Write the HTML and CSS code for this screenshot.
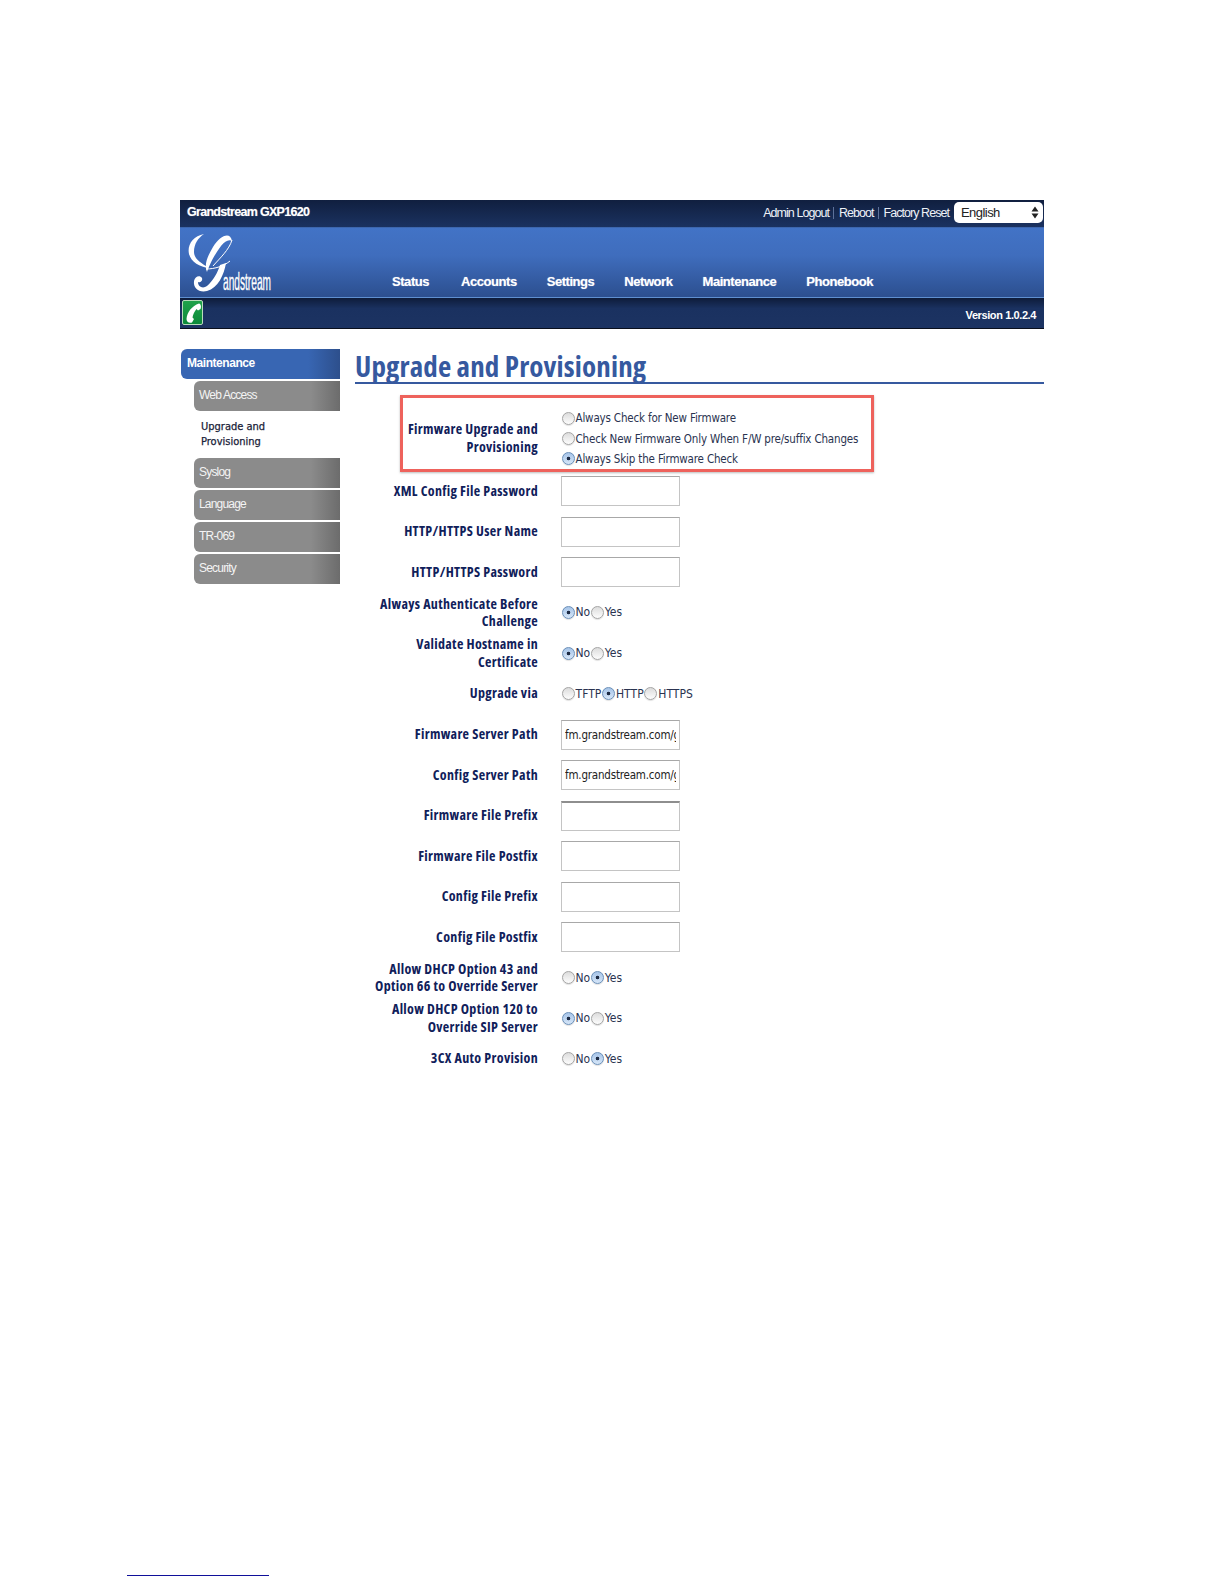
FILE: index.html
```html
<!DOCTYPE html>
<html lang="en">
<head>
<meta charset="utf-8">
<title>Upgrade and Provisioning</title>
<link rel="stylesheet" href="styles.css">
</head>
<body>
<div class="page">
  <div class="sheet">
    <header class="header">
      <div class="topbar">
        <div class="model">Grandstream GXP1620</div>
        <div class="toplinks">
          <a>Admin Logout</a><span class="sep"></span><a>Reboot</a><span class="sep"></span><a>Factory Reset</a>
          <div class="select"><span>English</span>
            <svg class="updown" width="8" height="13" viewBox="0 0 8 13"><path d="M4 0.5 7.500 5.500H.5zM4 12.500.5 7.500H7.500z"/></svg>
          </div>
        </div>
      </div>
      <div class="navband">
        <svg class="logo" width="150" height="70" viewBox="0 0 150 70">
          <path class="logo-mark" d="M24 6C13 8 7 17 9 26 11 34 20 39 29 40 21 35 14 31 14 24 14 16 18 10 24 6Z"/>
          <path class="logo-mark" d="M52 13C50 3 40 8 33 19 27 29 24 37 27 44 29 38 34 27 41 18 45 13 49 11 52 13Z"/>
          <path class="logo-line" d="M52 12C49 22 40 30 33 38M26 41C35 41 44 38 50 33"/>
          <path class="logo-mark" d="M46 35C44 47 38 60 27 63 19 65 13 60 14 53 15 48 20 47 22 50 23 53 20 55 18 54 18 59 23 61 27 58 33 53 38 44 40 37Z"/>
          <text class="logo-word" x="43" y="62" textLength="48" lengthAdjust="spacingAndGlyphs">andstream</text>
        </svg>
        <nav class="nav">
          <a>Status</a><a>Accounts</a><a>Settings</a><a>Network</a><a>Maintenance</a><a>Phonebook</a>
        </nav>
      </div>
      <div class="statusbar">
        <div class="phone">
          <svg width="18" height="23" viewBox="0 0 18 23"><path d="M15 2.500C17 3 17.500 6 16.500 8L14 9.500 12.500 8C10.500 10.500 9 13.500 8.500 16.500L10 18 8 21.500C5 22.500 2.500 21 2.500 18 3 11 8 5 15 2.500Z" fill="#fff"/></svg>
        </div>
        <div class="version">Version 1.0.2.4</div>
      </div>
    </header>

    <div class="content">
      <aside class="sidebar">
        <div class="side-head">Maintenance</div>
        <a class="side-item">Web Access</a>
        <a class="side-current">Upgrade and<br>Provisioning</a>
        <a class="side-item">Syslog</a>
        <a class="side-item">Language</a>
        <a class="side-item">TR-069</a>
        <a class="side-item">Security</a>
      </aside>

      <main class="main">
        <h1 class="title">Upgrade and Provisioning</h1>
        <form class="form">
          <div class="row-highlight">
            <div class="label">Firmware Upgrade and<br>Provisioning</div>
            <div class="stack">
              <label class="opt"><input type="radio" name="fw">Always Check for New Firmware</label>
              <label class="opt"><input type="radio" name="fw">Check New Firmware Only When F/W pre/suffix Changes</label>
              <label class="opt"><input type="radio" name="fw" checked>Always Skip the Firmware Check</label>
            </div>
          </div>

          <div class="row"><div class="label">XML Config File Password</div><input class="text" type="text"></div>
          <div class="row"><div class="label">HTTP/HTTPS User Name</div><input class="text" type="text"></div>
          <div class="row"><div class="label">HTTP/HTTPS Password</div><input class="text" type="text"></div>
          <div class="row"><div class="label">Always Authenticate Before<br>Challenge</div>
            <div class="inline"><label class="opt"><input type="radio" name="auth" checked>No</label><label class="opt"><input type="radio" name="auth">Yes</label></div></div>
          <div class="row"><div class="label">Validate Hostname in<br>Certificate</div>
            <div class="inline"><label class="opt"><input type="radio" name="host" checked>No</label><label class="opt"><input type="radio" name="host">Yes</label></div></div>
          <div class="row"><div class="label">Upgrade via</div>
            <div class="inline"><label class="opt"><input type="radio" name="via">TFTP</label><label class="opt"><input type="radio" name="via" checked>HTTP</label><label class="opt"><input type="radio" name="via">HTTPS</label></div></div>
          <div class="row"><div class="label">Firmware Server Path</div><input class="text" type="text" value="fm.grandstream.com/gs"></div>
          <div class="row"><div class="label">Config Server Path</div><input class="text" type="text" value="fm.grandstream.com/gs"></div>
          <div class="row"><div class="label">Firmware File Prefix</div><input class="text text-dark" type="text"></div>
          <div class="row"><div class="label">Firmware File Postfix</div><input class="text" type="text"></div>
          <div class="row"><div class="label">Config File Prefix</div><input class="text" type="text"></div>
          <div class="row"><div class="label">Config File Postfix</div><input class="text" type="text"></div>
          <div class="row"><div class="label">Allow DHCP Option 43 and<br>Option 66 to Override Server</div>
            <div class="inline"><label class="opt"><input type="radio" name="d43">No</label><label class="opt"><input type="radio" name="d43" checked>Yes</label></div></div>
          <div class="row"><div class="label">Allow DHCP Option 120 to<br>Override SIP Server</div>
            <div class="inline"><label class="opt"><input type="radio" name="d120" checked>No</label><label class="opt"><input type="radio" name="d120">Yes</label></div></div>
          <div class="row"><div class="label">3CX Auto Provision</div>
            <div class="inline"><label class="opt"><input type="radio" name="cx">No</label><label class="opt"><input type="radio" name="cx" checked>Yes</label></div></div>
        </form>
      </main>
    </div>
  </div>
  <div class="footnote-rule"></div>
</div>
</body>
</html>
```

FILE: styles.css
```css
* { box-sizing: border-box; }
html, body { margin: 0; padding: 0; background: #fff; }
body { font-family: "Liberation Sans", Arial, sans-serif; }

.page { height: 1584px; padding: 200px 0 0 127px; }
.sheet { width: 864px; margin-left: 53px; height: 1375px; }

/* header */
.header { width: 864px; color: #fff; }
.topbar {
  height: 27px; display: flex; justify-content: space-between; align-items: center;
  padding: 0 1px 0 7px;
  background: linear-gradient(#101f3f, #1b3260);
}
.model { font-size: 12.500px; font-weight: bold; letter-spacing: -.7px; margin-top: -3px; text-shadow: 0 0 1px rgba(255,255,255,.5); }
.toplinks { display: flex; align-items: center; margin-top: -2px; font-size: 12.500px; letter-spacing: -.95px; color: #eef2f8; }
.sep { width: 1px; height: 12px; background: #5d7199; margin: 0 5px 0 4px; }
.select {
  width: 89px; height: 21px; margin-left: 5px; padding: 0 4px 0 7px;
  display: flex; justify-content: space-between; align-items: center;
  background: #fff; border-radius: 5px; color: #222; font-size: 13px; letter-spacing: -.55px;
}
.updown { fill: #222; }
.navband {
  height: 71px; position: relative; display: flex; align-items: flex-end;
  background: linear-gradient(#4273c6 0%, #3f6dbd 40%, #2c4f8f 100%);
  border-top: 1px solid #3d66ad; border-bottom: 1px solid #5f8fd0;
}
.logo { position: absolute; left: 0; top: 0; overflow: visible; }
.logo-mark { fill: #fff; }
.logo-line { fill: none; stroke: #fff; stroke-width: 1; }
.logo-word { font-family: "Liberation Sans", sans-serif; font-size: 23px; fill: #fff; stroke: #fff; stroke-width: .35px; }
.nav { display: flex; gap: 30px; margin-left: 212px; padding-bottom: 8px; font-size: 13px; font-weight: bold; letter-spacing: -.45px; text-shadow: 0 0 1px rgba(255,255,255,.55); }
.nav a:first-child { margin-right: 2px; }
.statusbar {
  height: 31px; display: flex; justify-content: space-between; align-items: center;
  padding: 0 8px 0 2px;
  background: linear-gradient(#0e1c3a 0%, #1a3160 35%, #1c3362 100%);
  border-bottom: 1px solid #0a0f1c;
}
.phone {
  width: 21px; height: 25px; margin-top: -2px; border-radius: 2px; border: 1px solid #b9dcbb;
  background: linear-gradient(#1fa24a, #0c8a3a);
  display: flex; align-items: center; justify-content: center;
}
.version { margin-top: 3px; font-size: 11px; font-weight: bold; letter-spacing: -.4px; }

/* body layout */
.content { display: flex; margin-top: 20px; }
.sidebar { width: 159px; margin-left: 1px; flex: none; display: flex; flex-direction: column; }
.side-head {
  height: 30px; padding: 0 6px; line-height: 29px; color: #fff;
  font-size: 12px; font-weight: bold; letter-spacing: -.45px;
  border-radius: 6px 0 0 6px;
  background: linear-gradient(90deg, #3866b3 0%, #3866b3 80%, #2d4f8c 100%);
}
.side-item {
  display: block; height: 30px; margin: 2px 0 0 13px; padding: 0 5px; line-height: 28px;
  color: #f4f4f4; font-size: 12px; letter-spacing: -.8px;
  border-radius: 6px 0 0 6px;
  background: linear-gradient(90deg, #8b8b8b 0%, #8b8b8b 80%, #6c6c6c 100%);
}
.side-current {
  display: block; height: 30px; margin: 8px 0 7px 20px;
  font: 11px/15px "DejaVu Sans Condensed", "DejaVu Sans", sans-serif; font-stretch: condensed;
  color: #1a2238; -webkit-text-stroke: .25px #1a2238;
}

.main { width: 689px; margin-left: 15px; }
.title {
  margin: 0; height: 35px;
  font: bold 29px/34px "Open Sans", sans-serif; font-stretch: 75%; letter-spacing: .13px;
  color: #36599f; border-bottom: 2px solid #36599f; white-space: nowrap;
}
.form { margin-top: 11px; }

.label {
  margin-top: -2px;
  font: bold 14px/17.400px "Open Sans", sans-serif; font-stretch: 75%; letter-spacing: .33px;
  color: #10205a; text-align: right; white-space: nowrap; justify-self: end;
}
.row {
  height: 40.570px; display: grid; grid-template-columns: 183px auto; column-gap: 23px;
  align-items: center; justify-content: start;
}
.row-highlight {
  width: 474px; height: 77px; margin: 0 0 -1px 45px; padding-top: 10px;
  display: grid; grid-template-columns: 135px auto; column-gap: 23px; align-items: center; justify-content: start;
  border: 3px solid #ee625c; box-shadow: 0 1px 2px rgba(120,120,120,.5);
}
.stack { display: flex; flex-direction: column; }
.stack .opt { height: 20.400px; }
.inline { display: flex; margin-top: -1px; }
.opt {
  display: flex; align-items: center; white-space: nowrap;
  font: 11.500px/16px "DejaVu Sans Condensed", "DejaVu Sans", sans-serif; font-stretch: condensed;
  letter-spacing: -.17px; color: #2a3350;
}
.inline .opt { font-size: 12px; letter-spacing: .05px; }
.opt input {
  appearance: none; -webkit-appearance: none; margin: 0 1px 0 .5px; flex: none;
  width: 13px; height: 13px; border-radius: 50%;
  border: 1px solid #a4a4a4;
  background: linear-gradient(#dcdcdc, #fdfdfd);
  box-shadow: 0 1px 1px rgba(0,0,0,.12);
}
.opt input:checked {
  border-color: #6a8fb8;
  background: radial-gradient(circle, #1d2b44 0 1.600px, transparent 2.100px), linear-gradient(#a6c4e8, #d6e6f8);
}
.text {
  width: 119px; height: 30px; margin: 0; padding: 0 3px;
  border: 1px solid #c4c4c4; border-top-color: #a8a8a8; border-radius: 0; background: #fff;
  font: 11.500px "DejaVu Sans Condensed", "DejaVu Sans", sans-serif; font-stretch: condensed; letter-spacing: -.2px; color: #222;
}
.text-dark { border-top: 2px solid #8e8e8e; }

.footnote-rule { width: 142px; height: 1px; background: #10109a; }
```
